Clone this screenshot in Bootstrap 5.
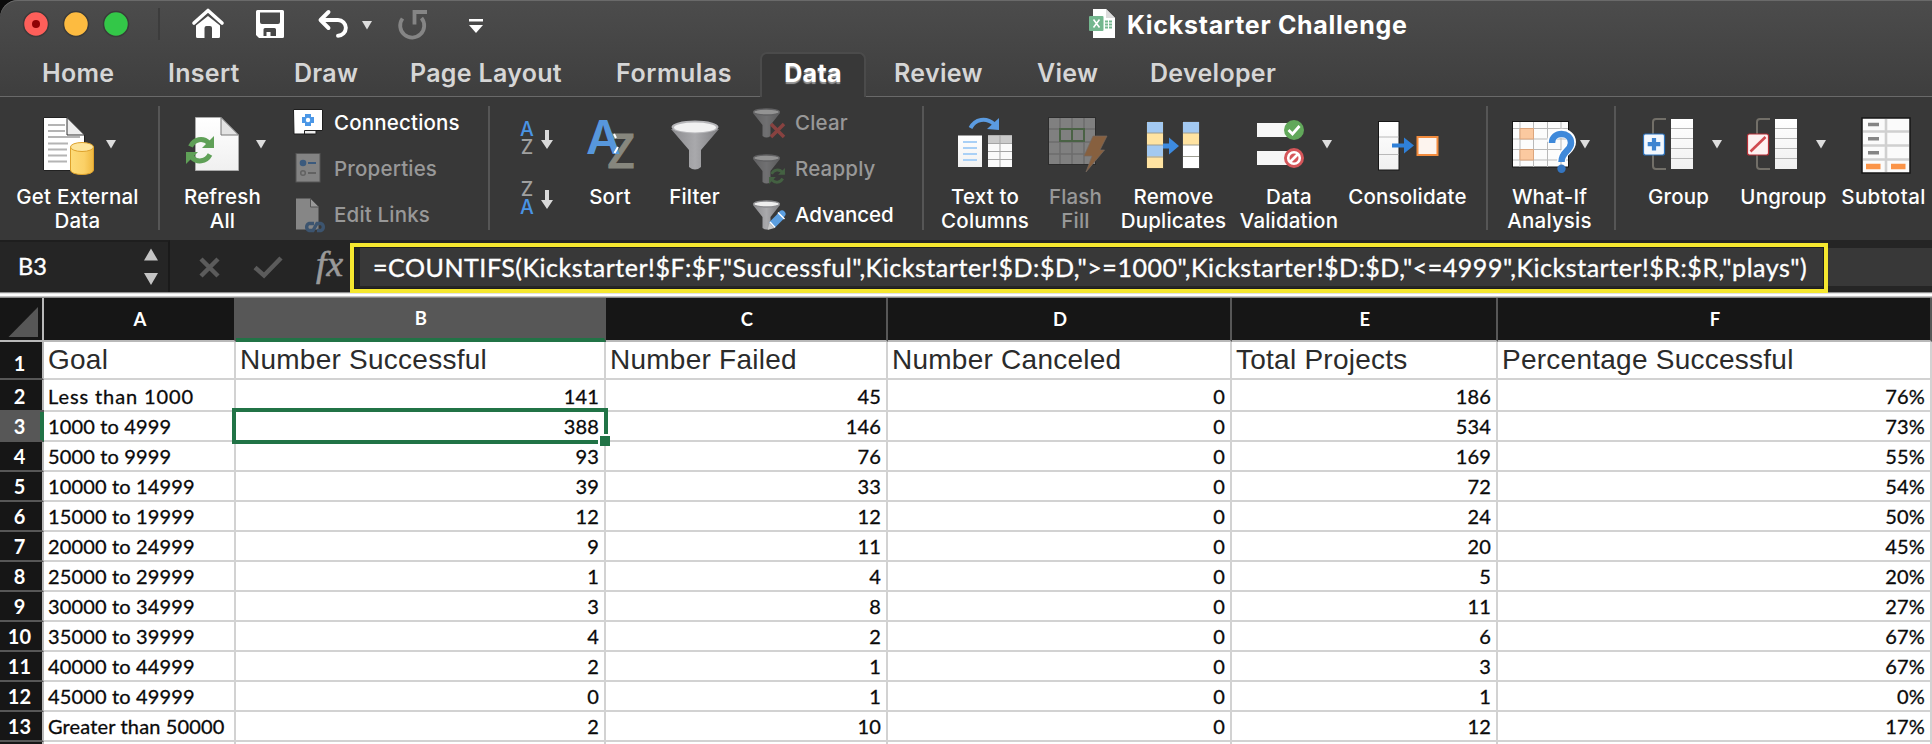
<!DOCTYPE html>
<html lang="en">
<head>
<meta charset="utf-8">
<meta name="viewport" content="width=device-width, initial-scale=1">
<title>Kickstarter Challenge</title>
<link href="https://cdn.jsdelivr.net/npm/bootstrap@5.3.0/dist/css/bootstrap.min.css" rel="stylesheet">
<style>
html,body{height:100%}
body{width:1932px;height:744px;overflow:hidden;background:#fff;font-family:Inter,"Liberation Sans",sans-serif}
svg{display:block;flex:none}
svg text{font-family:Inter,sans-serif}
.window-top{height:97px;background:linear-gradient(#4c4c4c,#3e3e3e);border-bottom:1px solid #696969;border-top-left-radius:18px;box-shadow:inset 0 1px 0 #6a6a6a}
.corner{background:#0b0b0b}
.titlebar{height:52px}
.doc-title{font-size:25px;font-weight:700;letter-spacing:.7px;line-height:50px;color:#fff;margin-left:12px}
.tabstrip{display:grid;grid-template-columns:126px 126px 116px 206px 144px 106px 171px 113px 1fr;padding-left:42px;height:45px;border:0}
.tabstrip .nav-link{padding:0;border:0;font-size:25px;font-weight:600;letter-spacing:.3px;line-height:42px;color:#d6d6d6;white-space:nowrap}
.tabstrip .nav-link.active{color:#fff;font-weight:700;background:#383838;text-align:center;border:2px solid #4b4b4b;border-bottom:0;border-radius:7px 7px 0 0;line-height:38px;text-shadow:0 2px 1px #999;height:45px}
.ribbon{height:143px;background:#383838;color:#fff;font-size:20.5px;font-weight:500;letter-spacing:.18px;line-height:24px;white-space:nowrap}
.divider{width:2px;height:124px;margin-top:9px;background:#565656;flex:none}
.tool{display:flex;flex-direction:column;align-items:center;text-align:center;flex:none}
.tool>span{padding-top:1px}
.off{color:#989898}
.stacked{padding-top:2px;flex:none}
.stacked>div{display:flex;align-items:center;height:46px}
.stacked span{padding-top:2px}
.formulabar{height:52px;background:#252525;color:#fff;font-family:Lato,"Liberation Sans",sans-serif;position:relative;-webkit-text-stroke:.35px}
.namebox{width:170px;border-right:2px solid #1a1a1a;border-top:2px solid #1e1e1e;font-size:23.5px;padding-left:18px;line-height:48px}
.entry{margin-top:8px;height:38px;background:#383838;margin-left:15px}
.marked{position:absolute;left:350px;top:3px;width:1478px;height:50px;border:4px solid #f5e72f;z-index:2;box-shadow:inset 0 0 0 1px #1e1e1e;padding-left:19px;font-size:25px;letter-spacing:.54px;line-height:40px;white-space:nowrap}
.seam{height:6px;background:linear-gradient(#8e8e8e 0 1px,#e4e4e4 1px 2px,#fff 2px 4px,#c4c4c4 4px 5px,#8b8b8b 5px)}
.sheet{table-layout:fixed;border-collapse:separate;border-spacing:0;width:1932px;font-family:Lato,"Liberation Sans",sans-serif;font-size:20px;letter-spacing:.15px;color:#0a0a0a;line-height:28px}
.sheet th,.sheet td{padding:0 5px 0 4px;border-right:2px solid #d2d2d2;border-bottom:2px solid #d2d2d2;height:30px;overflow:visible;white-space:nowrap;font-weight:400;position:relative}
.sheet td{-webkit-text-stroke:.3px}
.sheet td+td{text-align:right}
.sheet thead th{height:44px;background:#161616;color:#fff;font-weight:700;text-align:center;font-size:18.5px;border-right-color:#575757;border-bottom-color:#b9b9b9;line-height:40px;padding:1px 2px 1px 4px}
.sheet tr>th:first-child{background:#161616;color:#fff;font-weight:700;text-align:center;padding:0 3px 0 0;border-right-color:#b9b9b9;border-bottom-color:#575757}
.sheet thead tr>th:first-child{border-bottom-color:#b9b9b9}
.sheet thead th.picked{background:#575757;border-right-color:#575757;border-bottom:4px solid #217346;padding-top:0;padding-bottom:0}
.sheet tbody tr>th.picked{background:#575757!important;box-shadow:inset -2px 0 #217346,0 -2px #575757;border-right-color:#217346!important}
.sheet .titles td{height:38px;line-height:36px;font-family:"Liberation Sans",Arial,sans-serif;font-size:28px;letter-spacing:.25px;color:#2b2b2b;text-align:left;-webkit-text-stroke:0}
.sheet .titles th{padding-top:5px!important}
.sheet .second th,.sheet .second td{height:32px;padding-top:2px!important}
.cursor{position:absolute;inset:-4px;border:4px solid #217346;z-index:1}
.cursor::after{content:"";position:absolute;width:12px;height:12px;background:#217346;border-top:2px solid #fff;border-left:2px solid #fff;box-sizing:border-box;right:-6px;bottom:-6px}
</style>
</head>
<body>
<svg width="0" height="0" class="position-absolute">
<defs>
<linearGradient id="paper" x1="0" y1="0" x2="0" y2="1"><stop offset="0" stop-color="#fff"/><stop offset="1" stop-color="#f0f0f0"/></linearGradient>
<linearGradient id="steel"><stop offset="0" stop-color="#8b8b8e"/><stop offset=".5" stop-color="#a9a9ac"/><stop offset="1" stop-color="#7f7f82"/></linearGradient>
<linearGradient id="gold"><stop offset="0" stop-color="#fddc79"/><stop offset=".6" stop-color="#fbd066"/><stop offset="1" stop-color="#efb840"/></linearGradient>
<path id="caret" d="M0 0H10L5 8.5Z" fill="#dedede"/>
<g id="funnel"><path d="M-13.5 1L-4 13V24Q0 27 4 24V13L13.5 1Z" fill="url(#steel)"/><ellipse rx="13" ry="3" fill="#eee" stroke="#8b8b8e" stroke-width="1.3"/></g>
<g id="cycle"><path d="M4.500 10.500C8 3 17 1 23 7" fill="none" stroke-width="5"/><path d="M28 0V12H16Z" stroke="none"/><path d="M24 18.500C20 26 11 27 5.500 21" fill="none" stroke-width="5"/><path d="M0 28V16H12Z" stroke="none"/></g>
<path id="down" d="M-2 0H2V10H6L0 19L-6 10H-2Z" fill="#d9d9d9"/>
</defs>
</svg>

<div class="corner">
<header class="window-top">
  <div class="titlebar d-flex">
    <svg width="174" height="52" viewBox="0 0 174 52"><g stroke="#3a3a3a" stroke-width="1.500"><circle cx="36" cy="24" r="12.500" fill="#fe5f5a"/><circle cx="76" cy="24" r="12.500" fill="#fdbb40"/><circle cx="116" cy="24" r="12.500" fill="#33c748"/></g><circle cx="36" cy="24" r="4" fill="#8f0306"/><path d="M159 8V40" stroke="#3c3c3c" stroke-width="2"/></svg>
    <svg width="66" height="52" viewBox="174 0 66 52"><path d="M194 23L208 10.500L222 23" fill="none" stroke="#fff" stroke-width="3.600" stroke-linecap="round" stroke-linejoin="round"/><path d="M196 25.500L208 16L220 25.500V36.500Q220 38 218.500 38H212V28Q212 26 210 26H206.500Q204.500 26 204.500 28V38H197.500Q196 38 196 36.500Z" fill="#fff"/></svg>
    <svg width="60" height="52" viewBox="240 0 60 52"><path fill="#fff" fill-rule="evenodd" d="M257.500 10H282.500Q284 10 284 11.500V36.500Q284 38 282.500 38H259L256 35V11.500Q256 10 257.500 10ZM260 12.500V22Q260 24 262 24H278Q280 24 280 22V12.500ZM263.500 36H266.500V32H270.500V36H276V29.500Q276 28 274.500 28H265Q263.500 28 263.500 29.500Z"/></svg>
    <svg width="84" height="52" viewBox="300 0 84 52"><path d="M328.500 12L320.500 20L328.500 28M321 20H338A7.800 7.800 0 0 1 338 35.700" fill="none" stroke="#fff" stroke-width="3.900" stroke-linecap="round" stroke-linejoin="round"/><use href="#caret" x="362" y="21"/></svg>
    <svg width="66" height="52" viewBox="384 0 66 52"><path d="M402.500 18.500A12 12 0 1 0 421.500 18M414.500 24.500V12H427" fill="none" stroke="#858585" stroke-width="3.800"/></svg>
    <svg width="60" height="52" viewBox="450 0 60 52"><path d="M469 19H483V21.500H469ZM469 25H483L476 33Z" fill="#fff"/></svg>
    <svg width="605" height="52" viewBox="510 0 605 52"><path d="M1093 9H1106L1115 18V38H1093Z" fill="#fff"/><path d="M1106 9V18H1115Z" fill="#dcdcdc"/><rect x="1089" y="16" width="14.500" height="15" rx="1" fill="#74b78f"/><path d="M1093.500 19.500L1099.500 27.500M1099.500 19.500L1093.500 27.500" stroke="#fff" stroke-width="1.600"/><path d="M1105 21.500H1112M1105 24.500H1112M1105 27.500H1112" stroke="#74b78f" stroke-width="2" stroke-dasharray="3 1"/></svg>
    <span class="doc-title">Kickstarter Challenge</span>
  </div>
  <nav class="nav tabstrip">
    <a class="nav-link">Home</a><a class="nav-link">Insert</a><a class="nav-link">Draw</a><a class="nav-link">Page Layout</a><a class="nav-link" style="letter-spacing:.55px">Formulas</a><a class="nav-link active">Data</a><a class="nav-link" style="padding-left:28px">Review</a><a class="nav-link">View</a><a class="nav-link">Developer</a>
  </nav>
</header>
</div>

<section class="ribbon d-flex">
  <div class="tool" style="width:155px;margin-right:3px"><svg width="155" height="87" viewBox="0 97 155 87"><path d="M43.500 117.500H67L84.500 135V170.500H43.500Z" fill="#fff" stroke="#222"/><path d="M67 117.500V135H84.500Z" fill="#eee" stroke="#333"/><path d="M48 125H65M48 131H65M48 137H80M48 143.500H68M48 149.500H67M48 155.500H67M48 161.500H67" stroke="#b4b4b4" stroke-width="2"/><path d="M70.500 147V170C70.500 176 93.500 176 93.500 170V147Z" fill="url(#gold)" stroke="#dea22c"/><ellipse cx="82" cy="147" rx="11.500" ry="4.500" fill="#fde59d" stroke="#dea22c"/><use href="#caret" x="106" y="140"/></svg><span>Get External<br>Data</span></div>
  <div class="divider"></div>
  <div class="tool" style="width:125px"><svg width="125" height="87" viewBox="160 97 125 87"><path d="M195.500 117.500H221L238.500 135V170.500H195.500Z" fill="url(#paper)" stroke="#aaa"/><path d="M221 117.500V135H238.500Z" fill="#e3e3e3" stroke="#777"/><use href="#cycle" x="186" y="136" stroke="#5fa057" fill="#5fa057"/><use href="#caret" x="256" y="140"/></svg><span>Refresh<br>All</span></div>
  <div class="stacked" style="width:203px">
    <div><svg width="49" height="46" viewBox="285 99 49 46"><path d="M293.500 109.500H322.500V130.500H315V134H294Z" fill="#fff" stroke="#1d1d1d"/><path d="M304.500 134V130.500H316V134Z" fill="#ededed" stroke="#222"/><path d="M305 114H311V117H314V123H311V126H305V123H302V117H305Z" fill="#4b97e6"/><circle cx="308" cy="120" r="2.200" fill="#fff"/></svg><span>Connections</span></div>
    <div class="off"><svg width="49" height="46" viewBox="285 145 49 46"><rect x="296" y="153.500" width="24" height="28.500" fill="#838383" stroke="#555"/><circle cx="303" cy="163" r="3.300" fill="#3b5a7d"/><path d="M308 163H316" stroke="#3b5a7d" stroke-width="2"/><circle cx="303" cy="173" r="2.300" fill="none" stroke="#626262" stroke-width="1.500"/><path d="M308 173H316" stroke="#626262" stroke-width="2"/></svg><span>Properties</span></div>
    <div class="off"><svg width="49" height="46" viewBox="285 191 49 46"><path d="M296 198.500H310L318.500 207V229.500H296Z" fill="#868686"/><path d="M310.500 198.500V207H319Z" fill="#9a9a9a" stroke="#555"/><path d="M314 223.500H309A3.800 3.800 0 0 0 309 230.500H313L317 223.500H321A3.800 3.800 0 0 1 321 230.500H317" fill="none" stroke="#3c546f" stroke-width="3.400"/></svg><span>Edit Links</span></div>
  </div>
  <div class="divider"></div>
  <svg width="85" height="143" viewBox="490 97 85 143"><g font-size="19.500" text-anchor="middle"><text x="527" y="136" fill="#4a94e4">A</text><text x="527" y="154" fill="#a0a0a0">Z</text><text x="527" y="196" fill="#a0a0a0">Z</text><text x="527" y="214" fill="#4a94e4">A</text></g><use href="#down" x="547" y="130"/><use href="#down" x="547" y="190"/></svg>
  <div class="tool" style="width:70px"><svg width="70" height="87" viewBox="575 97 70 87"><g font-size="46.500"><text x="606" y="168" fill="#87877e" stroke="#87877e" font-weight="500" textLength="30" lengthAdjust="spacingAndGlyphs">Z</text><text x="586" y="154" fill="#5797dc" font-weight="600" textLength="35" lengthAdjust="spacingAndGlyphs">A</text></g><path d="M614 134L616 138M614.500 153L618 147" stroke="#fff" stroke-width="2"/></svg><span>Sort</span></div>
  <div class="tool" style="width:99px"><svg width="99" height="87" viewBox="645 97 99 87"><path d="M671 129L689 150V167Q695 172 701 167V150L719 129Z" fill="url(#steel)"/><ellipse cx="695" cy="127" rx="23.500" ry="6.500" fill="#b5b5b8"/><ellipse cx="695" cy="127.500" rx="21" ry="5" fill="#f1f1f1"/></svg><span>Filter</span></div>
  <div class="stacked" style="width:178px">
    <div class="off"><svg width="51" height="46" viewBox="744 99 51 46"><use href="#funnel" x="766.500" y="112" opacity=".5"/><path d="M771 124L784 137M784 124L771 137" stroke="#884240" stroke-width="3.500"/></svg><span>Clear</span></div>
    <div class="off"><svg width="51" height="46" viewBox="744 145 51 46"><use href="#funnel" x="766.500" y="158" opacity=".5"/><use href="#cycle" transform="translate(769 168) scale(.57)" stroke="#446142" fill="#446142"/></svg><span>Reapply</span></div>
    <div><svg width="51" height="46" viewBox="744 191 51 46"><use href="#funnel" x="766.500" y="204"/><path d="M781 216L772 225" stroke="#5c9fe0" stroke-width="8"/><path d="M782 214L781 215" stroke="#5c9fe0" stroke-width="7" stroke-linecap="round"/><path d="M778 212.500L784.500 219M770 222L775 227.500" stroke="#fff" stroke-width="1.500"/><path d="M769.500 223L774.500 228L767.500 230Z" fill="#c8c8c8"/></svg><span style="letter-spacing:-.1px">Advanced</span></div>
  </div>
  <div class="divider"></div>
  <div class="tool" style="width:122px"><svg width="122" height="87" viewBox="924 97 122 87"><path d="M970.500 128C975 119 986 117 994 124" fill="none" stroke="#5b9be0" stroke-width="4"/><path d="M999 118V130L987 129Z" fill="#5b9be0"/><rect x="958" y="135.500" width="24" height="31.500" fill="url(#paper)"/><path d="M963 142H977M963 148H977M963 154H977M963 160H977" stroke="#a9d0f6" stroke-width="1.800"/><rect x="988" y="135.500" width="24" height="31.500" fill="#fafafa"/><rect x="988" y="135.500" width="24" height="8" fill="#cacaca"/><path d="M1000 135V167M988 143.500H1012M988 151.500H1012M988 159.500H1012" stroke="#a5a5a5"/></svg><span>Text to<br>Columns</span></div>
  <div class="tool off" style="width:59px"><svg width="64" height="87" viewBox="1044 97 64 87"><rect x="1048.500" y="117.500" width="47" height="47" fill="#808080" stroke="#2c2c2c"/><path d="M1060 118V164M1072 118V164M1084 118V164M1049 129H1095M1049 142H1095M1049 154H1095" stroke="#6c6c6c" stroke-width="1.500"/><path d="M1060 129H1084V141H1060ZM1072 129V141" fill="none" stroke="#4a6245" stroke-width="2"/><path d="M1093 136H1107L1100 150H1104.500L1086 172L1092 156H1084Z" fill="#87603f" stroke="#77695f" stroke-width=".7"/></svg><span>Flash<br>Fill</span></div>
  <div class="tool" style="width:137px"><svg width="137" height="87" viewBox="1105 97 137 87"><g stroke="#222" stroke-width=".7"><rect x="1146.500" y="121.500" width="17" height="47" fill="#ffe3a1"/><rect x="1182.500" y="121.500" width="17" height="47" fill="#fff"/></g><path d="M1147 122H1163V133H1147ZM1147 145H1163V156.500H1147ZM1183 122H1199V133H1183Z" fill="#a3c9f1"/><path d="M1183 133H1199V145H1183Z" fill="#ffe3a1"/><path d="M1147 133H1163M1147 145H1163M1147 157H1163M1183 133H1199M1183 145H1199M1183 156.500H1199" stroke="#9d9d91" stroke-width="1"/><path d="M1163 143.500H1169V137.500L1179 146L1169 154.500V148.500H1163Z" fill="#3d8be0"/></svg><span>Remove<br>Duplicates</span></div>
  <div class="tool" style="width:94px"><svg width="94" height="87" viewBox="1242 97 94 87"><rect x="1257" y="123" width="35" height="14" fill="#f6f6f6"/><rect x="1257" y="151" width="35" height="14" fill="#f6f6f6"/><circle cx="1294" cy="130" r="10" fill="#61a85a"/><path d="M1288.500 130L1292.500 134L1299.500 126" fill="none" stroke="#fff" stroke-width="2.800"/><circle cx="1294" cy="158" r="10" fill="#d5565a"/><circle cx="1294" cy="158" r="5.800" fill="#d5565a" stroke="#fff" stroke-width="2.600"/><path d="M1290 162L1298 154" stroke="#fff" stroke-width="2.600"/><use href="#caret" x="1322" y="140"/></svg><span>Data<br>Validation</span></div>
  <div class="tool" style="width:143px"><svg width="143" height="87" viewBox="1336 97 143 87"><rect x="1378.500" y="121.500" width="20.500" height="48.500" fill="url(#paper)" stroke="#161616"/><path d="M1379 137H1398.500M1379 154.500H1398.500" stroke="#b8b8b8"/><path d="M1392 143.500H1404V137.500L1414 145.500L1404 153.500V147.500H1392Z" fill="#2f80d8"/><rect x="1417.500" y="137" width="20" height="18" fill="#fdf4ee" stroke="#f28b3d" stroke-width="2"/></svg><span>Consolidate</span></div>
  <div class="divider" style="margin-left:7px"></div>
  <div class="tool" style="width:123px"><svg width="123" height="87" viewBox="1488 97 123 87"><rect x="1512.500" y="121.500" width="56" height="45.500" fill="#fcfcfc" stroke="#161616"/><path d="M1520 122V167M1533.500 122V167M1547.500 122V167M1561 122V167M1513 128.500H1568M1513 139H1568M1513 149.500H1568M1513 160H1568" stroke="#b9b9b9"/><path d="M1520 128.500H1533.500V139H1520ZM1520 149.500H1533.500V160H1520Z" fill="#fbc9a0" stroke="#dca57c"/><path d="M1551.500 142C1552 130 1571.500 130.500 1571.500 142C1571.500 151 1561.500 150 1561.500 161.500" fill="none" stroke="#fff" stroke-width="9"/><path d="M1552 143C1552 131 1571 131 1571 143C1571 151 1561.500 151 1561.500 162" fill="none" stroke="#3f89da" stroke-width="6.500"/><circle cx="1561.500" cy="168.800" r="4.200" fill="#3475c0"/><use href="#caret" x="1580" y="140"/></svg><span>What-If<br>Analysis</span></div>
  <div class="divider" style="margin-left:3px"></div>
  <div class="tool" style="width:105px;margin-left:10px"><svg width="105" height="87" viewBox="1626 97 105 87"><path d="M1666 119H1656Q1653 119 1653 122V166Q1653 169 1656 169H1666" fill="none" stroke="#726f68" stroke-width="2"/><rect x="1671" y="119" width="22" height="50" fill="url(#paper)"/><path d="M1671 128.500H1693M1671 138.500H1693M1671 148.500H1693M1671 158.500H1693" stroke="#b8b8b8"/><rect x="1643.500" y="134" width="21" height="21" rx="2" fill="#f3f8fe" stroke="#2b72bd" stroke-width="1.200"/><path d="M1654 138V150.500M1647.700 144.200H1660.300" stroke="#3e84d0" stroke-width="4.200"/><use href="#caret" x="1712" y="140"/></svg><span>Group</span></div>
  <div class="tool" style="width:105px"><svg width="105" height="87" viewBox="1731 97 105 87"><path d="M1770 119H1760Q1757 119 1757 122V166Q1757 169 1760 169H1770" fill="none" stroke="#726f68" stroke-width="2"/><rect x="1775" y="119" width="22" height="50" fill="url(#paper)"/><path d="M1775 128.500H1797M1775 138.500H1797M1775 148.500H1797M1775 158.500H1797" stroke="#b8b8b8"/><rect x="1747.500" y="134" width="21" height="21" rx="2" fill="#fdf1f1" stroke="#b52f36" stroke-width="1.200"/><path d="M1750.500 151.500L1765.500 137" stroke="#d04a50" stroke-width="2.600"/><use href="#caret" x="1816" y="140"/></svg><span>Ungroup</span></div>
  <div class="tool" style="width:95px"><svg width="95" height="87" viewBox="1836 97 95 87"><rect x="1862" y="118" width="48" height="55" fill="#fbfbfb" stroke="#161616" stroke-width="1.500"/><path d="M1863 131.500H1909M1863 145.500H1909M1863 159.500H1909M1886 119V172" stroke="#d0d0d0" stroke-width="2.600"/><path d="M1868 124.500H1879M1868 138.700H1879M1868 152.700H1879" stroke="#858585" stroke-width="3.400"/><path d="M1866 166.500H1880.500M1891 166.500H1905.500" stroke="#fb9448" stroke-width="5.500"/></svg><span style="letter-spacing:.4px">Subtotal</span></div>
</section>

<section class="formulabar d-flex">
  <div class="namebox d-flex justify-content-between">B3<svg width="26" height="50" viewBox="142 242 26 50"><path d="M144 260.500L151 248.500L158 260.500ZM144 273H158L151 285Z" fill="#c4c4c4"/></svg></div>
  <svg width="175" height="52" viewBox="170 240 175 52"><path d="M201 259L218 276M218 259L201 276" stroke="#5b5b5b" stroke-width="4.500"/><path d="M255 267.500L264 275.500L281 258" fill="none" stroke="#5b5b5b" stroke-width="4.500"/><text x="316" y="276" fill="#9a9a9a" stroke="#9a9a9a" stroke-width=".6" font-size="35" font-style="italic" style="font-family:'Liberation Serif',serif" textLength="27" lengthAdjust="spacingAndGlyphs">fx</text></svg>
  <div class="entry flex-grow-1"></div>
  <div class="marked">=COUNTIFS(Kickstarter!$F:$F,"Successful",Kickstarter!$D:$D,"&gt;=1000",Kickstarter!$D:$D,"&lt;=4999",Kickstarter!$R:$R,"plays")</div>
</section>
<div class="seam"></div>

<table class="sheet">
<colgroup><col style="width:44px"><col style="width:192px"><col style="width:370px"><col style="width:282px"><col style="width:344px"><col style="width:266px"><col style="width:434px"></colgroup>
<thead><tr><th><svg width="42" height="40" viewBox="0 298 42 40"><path d="M8.500 336H38V306Z" fill="#575757"/></svg></th><th>A</th><th class="picked">B</th><th>C</th><th>D</th><th>E</th><th>F</th></tr></thead>
<tbody>
<tr class="titles"><th>1</th><td>Goal</td><td>Number Successful</td><td>Number Failed</td><td>Number Canceled</td><td>Total Projects</td><td>Percentage Successful</td></tr>
<tr class="second"><th>2</th><td style="letter-spacing:.9px">Less than 1000</td><td>141</td><td>45</td><td>0</td><td>186</td><td>76%</td></tr>
<tr><th class="picked">3</th><td>1000 to 4999</td><td>388<span class="cursor"></span></td><td>146</td><td>0</td><td>534</td><td>73%</td></tr>
<tr><th>4</th><td>5000 to 9999</td><td>93</td><td>76</td><td>0</td><td>169</td><td>55%</td></tr>
<tr><th>5</th><td>10000 to 14999</td><td>39</td><td>33</td><td>0</td><td>72</td><td>54%</td></tr>
<tr><th>6</th><td>15000 to 19999</td><td>12</td><td>12</td><td>0</td><td>24</td><td>50%</td></tr>
<tr><th>7</th><td>20000 to 24999</td><td>9</td><td>11</td><td>0</td><td>20</td><td>45%</td></tr>
<tr><th>8</th><td>25000 to 29999</td><td>1</td><td>4</td><td>0</td><td>5</td><td>20%</td></tr>
<tr><th>9</th><td>30000 to 34999</td><td>3</td><td>8</td><td>0</td><td>11</td><td>27%</td></tr>
<tr><th>10</th><td>35000 to 39999</td><td>4</td><td>2</td><td>0</td><td>6</td><td>67%</td></tr>
<tr><th>11</th><td>40000 to 44999</td><td>2</td><td>1</td><td>0</td><td>3</td><td>67%</td></tr>
<tr><th>12</th><td>45000 to 49999</td><td>0</td><td>1</td><td>0</td><td>1</td><td>0%</td></tr>
<tr><th>13</th><td>Greater than 50000</td><td>2</td><td>10</td><td>0</td><td>12</td><td>17%</td></tr>
<tr><th></th><td></td><td></td><td></td><td></td><td></td><td></td></tr>
</tbody>
</table>
<script src="https://cdn.jsdelivr.net/npm/bootstrap@5.3.0/dist/js/bootstrap.bundle.min.js"></script>
</body>
</html>
